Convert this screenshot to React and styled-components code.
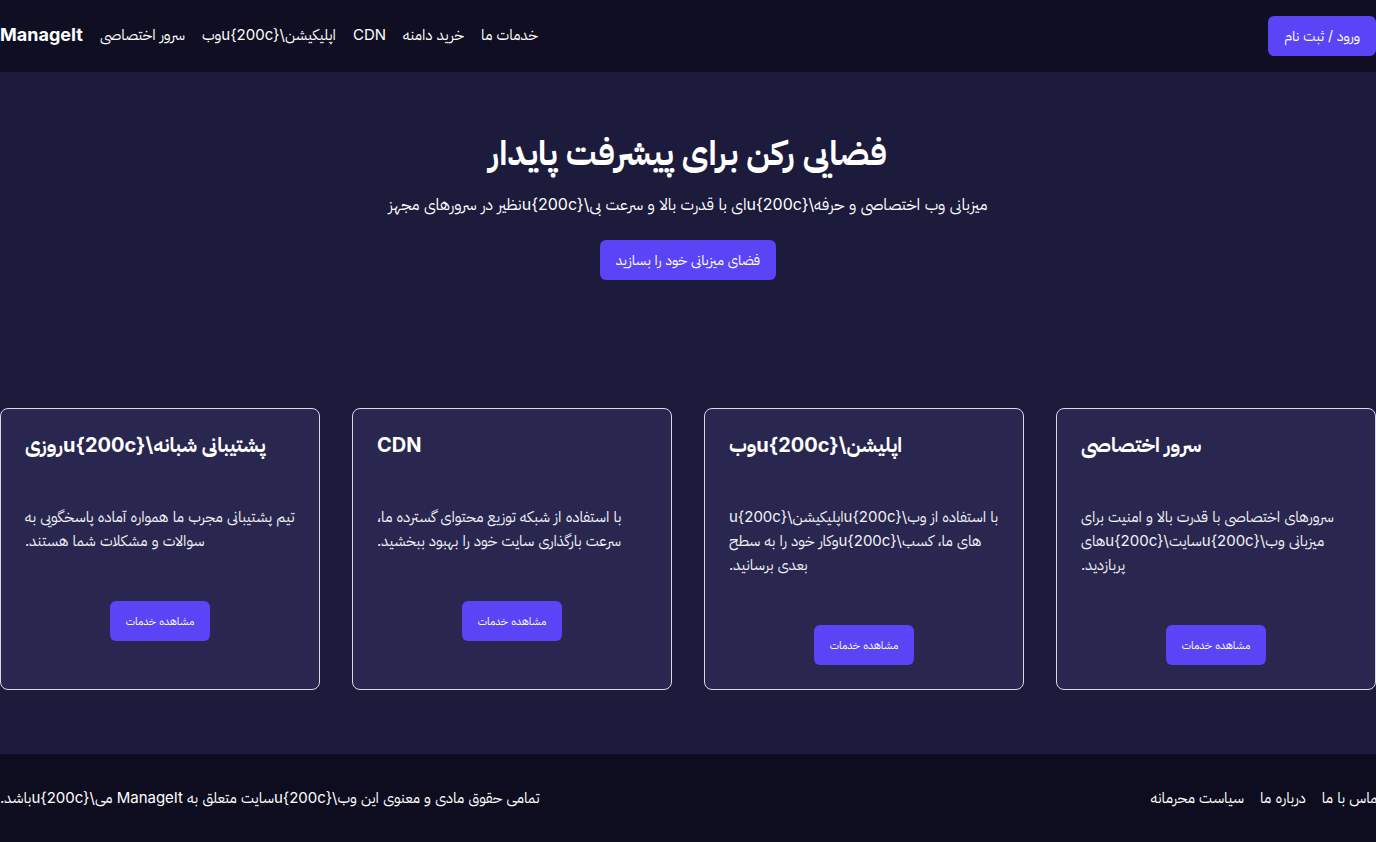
import React from 'react';
import styled, { createGlobalStyle } from 'styled-components';

const GlobalStyle = createGlobalStyle`
  * {
    box-sizing: border-box;
  }
  html, body {
    margin: 0;
    padding: 0;
    overflow-x: hidden;
  }
  body {
    background: #1c1b3b;
    color: #ffffff;
    font-family: Inter, "IBM Plex Sans Arabic", sans-serif;
  }
`;

const ZW = '\\u{200c}';

const services = [
  {
    title: 'سرور اختصاصی',
    text: `سرورهای اختصاصی با قدرت بالا و امنیت برای میزبانی وب${ZW}سایت${ZW}های پربازدید.`,
  },
  {
    title: `اپلیشن${ZW}وب`,
    text: `با استفاده از وب${ZW}اپلیکیشن${ZW}های ما، کسب${ZW}وکار خود را به سطح بعدی برسانید.`,
  },
  {
    title: 'CDN',
    text: 'با استفاده از شبکه توزیع محتوای گسترده ما، سرعت بارگذاری سایت خود را بهبود ببخشید.',
  },
  {
    title: `پشتیبانی شبانه${ZW}روزی`,
    text: 'تیم پشتیبانی مجرب ما همواره آماده پاسخگویی به سوالات و مشکلات شما هستند.',
  },
];

const navItems = ['خدمات ما', 'خرید دامنه', 'CDN', `اپلیکیشن${ZW}وب`, 'سرور اختصاصی'];

const App = () => {
  return (
    <Page dir="rtl">
      <GlobalStyle />
      <Header>
        <Button>ورود / ثبت نام</Button>
        <NavGroup>
          {navItems.map((item) => (
            <NavLink key={item} href="#">
              {item}
            </NavLink>
          ))}
          <Brand>ManageIt</Brand>
        </NavGroup>
      </Header>

      <Hero>
        <HeroTitle>فضایی رکن برای پیشرفت پایدار</HeroTitle>
        <HeroText>
          {`میزبانی وب اختصاصی و حرفه${ZW}ای با قدرت بالا و سرعت بی${ZW}نظیر در سرورهای مجهز`}
        </HeroText>
        <Button>فضای میزبانی خود را بسازید</Button>
      </Hero>

      <Services>
        {services.map((s) => (
          <Card key={s.title}>
            <CardTitle>{s.title}</CardTitle>
            <CardText>{s.text}</CardText>
            <CardAction>
              <Button small>مشاهده خدمات</Button>
            </CardAction>
          </Card>
        ))}
      </Services>

      <Footer>
        <FooterLinks>
          <FooterLink href="#">تماس با ما</FooterLink>
          <FooterLink href="#">درباره ما</FooterLink>
          <FooterLink href="#">سیاست محرمانه</FooterLink>
        </FooterLinks>
        <Copyright>
          {`تمامی حقوق مادی و معنوی این وب${ZW}سایت متعلق به ManageIt می${ZW}باشد.`}
        </Copyright>
      </Footer>
    </Page>
  );
};

const Page = styled.div`
  min-height: 100vh;
  display: flex;
  flex-direction: column;
`;

const Header = styled.header`
  background: #0f0e22;
  height: 72px;
  display: flex;
  align-items: center;
  justify-content: space-between;
`;

const NavGroup = styled.nav`
  display: flex;
  align-items: center;
  gap: 17px;
  padding-bottom: 3px;
`;

const NavLink = styled.a`
  color: #ffffff;
  text-decoration: none;
  font-size: 15px;
  line-height: 20px;
`;

const Brand = styled.a`
  font-size: 18px;
  font-weight: 700;
  line-height: 28px;
  color: #ffffff;
`;

const Button = styled.button`
  background: #5b44f6;
  color: #ffffff;
  border: none;
  border-radius: 6px;
  font-family: Inter, "IBM Plex Sans Arabic", sans-serif;
  font-size: ${(props) => (props.small ? '11px' : '14px')};
  line-height: 20px;
  padding: 10px 16px;
  cursor: pointer;
  &:hover {
    background: #4f39e6;
  }
`;

const Hero = styled.section`
  padding: 61px 0 64px;
  display: flex;
  flex-direction: column;
  align-items: center;
  text-align: center;
`;

const HeroTitle = styled.h1`
  margin: 0 0 19px;
  font-size: 34px;
  line-height: 40px;
  font-weight: 700;
`;

const HeroText = styled.p`
  margin: 0 0 24px;
  font-size: 16px;
  line-height: 24px;
`;

const Services = styled.section`
  padding: 64px 0;
  display: grid;
  grid-template-columns: repeat(4, 1fr);
  gap: 32px;
`;

const Card = styled.div`
  background: #29274f;
  border: 1px solid #d8d8e6;
  border-radius: 8px;
  padding: 24px;
  text-align: left;
`;

const CardTitle = styled.h3`
  margin: 0 0 48px;
  font-size: 20px;
  line-height: 24px;
  font-weight: 700;
`;

const CardText = styled.p`
  margin: 0 0 48px;
  font-size: 15px;
  line-height: 24px;
  color: #f1f1f6;
`;

const CardAction = styled.div`
  display: flex;
  justify-content: center;
`;

const Footer = styled.footer`
  background: #0e0d20;
  padding: 32px 0;
  display: flex;
  justify-content: space-between;
  align-items: center;
`;

const FooterLinks = styled.div`
  display: flex;
  gap: 16px;
  margin-right: -6px;
`;

const FooterLink = styled.a`
  color: #ffffff;
  text-decoration: none;
  font-size: 15px;
  line-height: 24px;
`;

const Copyright = styled.p`
  margin: 0;
  font-size: 15px;
  line-height: 24px;
`;

export default App;
